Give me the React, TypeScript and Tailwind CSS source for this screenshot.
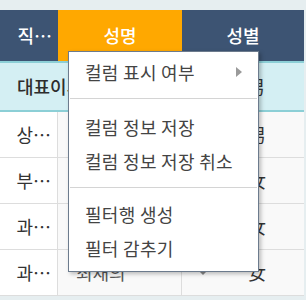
const font = { fontFamily: '"Noto Sans CJK KR", "Noto Sans", sans-serif' };

const rows = [
  { pos: '상무', name: '', sex: '男' },
  { pos: '부장', name: '', sex: '女' },
  { pos: '과장', name: '', sex: '女' },
  { pos: '과장', name: '최재의', sex: '女' },
];

function MenuItem({ label, arrow }: { label: string; arrow?: boolean }) {
  return (
    <div className="flex h-[34px] items-center justify-between pl-[16px] pr-[16px] text-[18px] tracking-[0.3px] text-[#444]">
      <span>{label}</span>
      {arrow && (
        <span className="h-0 w-0 border-y-[5px] border-l-[6px] border-y-transparent border-l-[#9a9a9a]" />
      )}
    </div>
  );
}

export default function App() {
  return (
    <div className="relative h-[300px] w-[306px] overflow-hidden bg-[#e6eef0] pt-[10px]" style={font}>
      <div className="w-[304px]">
        <div className="grid h-[51px] grid-cols-[58px_124px_122px] bg-[#3d5473] text-[18px] font-medium text-white">
          <div className="flex items-center justify-end pr-[6px]">직…</div>
          <div className="flex items-center justify-center bg-[#ffa800]">성명</div>
          <div className="flex items-center justify-center">성별</div>
        </div>
        <div className="h-[2px] bg-[#8ccfd6]" />
        <div className="relative flex h-[47px] items-center bg-[#d4eff3] pl-[17px] text-[18px] font-medium text-[#2d2d2d]">
          <span>대표이사</span>
          <span className="absolute left-[247px] font-normal text-[#333]">男</span>
        </div>
        <div className="h-[2px] bg-[#8ccfd6]" />
        {rows.map((r, i) => (
          <div
            key={i}
            className="grid h-[46px] grid-cols-[58px_124px_122px] border-b border-[#dddddd] bg-[#f9f9f9] text-[18px] text-[#333]"
          >
            <div className="flex items-center justify-end border-r border-[#dddddd] bg-white pr-[6px]">
              {r.pos.slice(0, 1)}…
            </div>
            <div className="flex items-center border-r border-[#dddddd] pl-[18px] text-[#555]">{r.name}</div>
            <div className="flex items-center pl-[16px]">
              <span className="h-0 w-0 border-x-[5px] border-t-[5px] border-x-transparent border-t-[#888]" />
              <span className="ml-[40px]">{r.sex}</span>
            </div>
          </div>
        ))}
      </div>

      <div className="absolute left-[68px] top-[51px] h-[221px] w-[191px] border border-[#6c7b8d] bg-white pt-[3px] shadow-[2px_2px_4px_rgba(0,0,0,0.25)]">
        <MenuItem label="컬럼 표시 여부" arrow />
        <div className="mx-[1px] mb-[11px] mt-[9px] h-px bg-[#d4d4d4]" />
        <MenuItem label="컬럼 정보 저장" />
        <MenuItem label="컬럼 정보 저장 취소" />
        <div className="mx-[1px] mb-[9px] mt-[9px] h-px bg-[#d4d4d4]" />
        <MenuItem label="필터행 생성" />
        <MenuItem label="필터 감추기" />
      </div>
    </div>
  );
}
